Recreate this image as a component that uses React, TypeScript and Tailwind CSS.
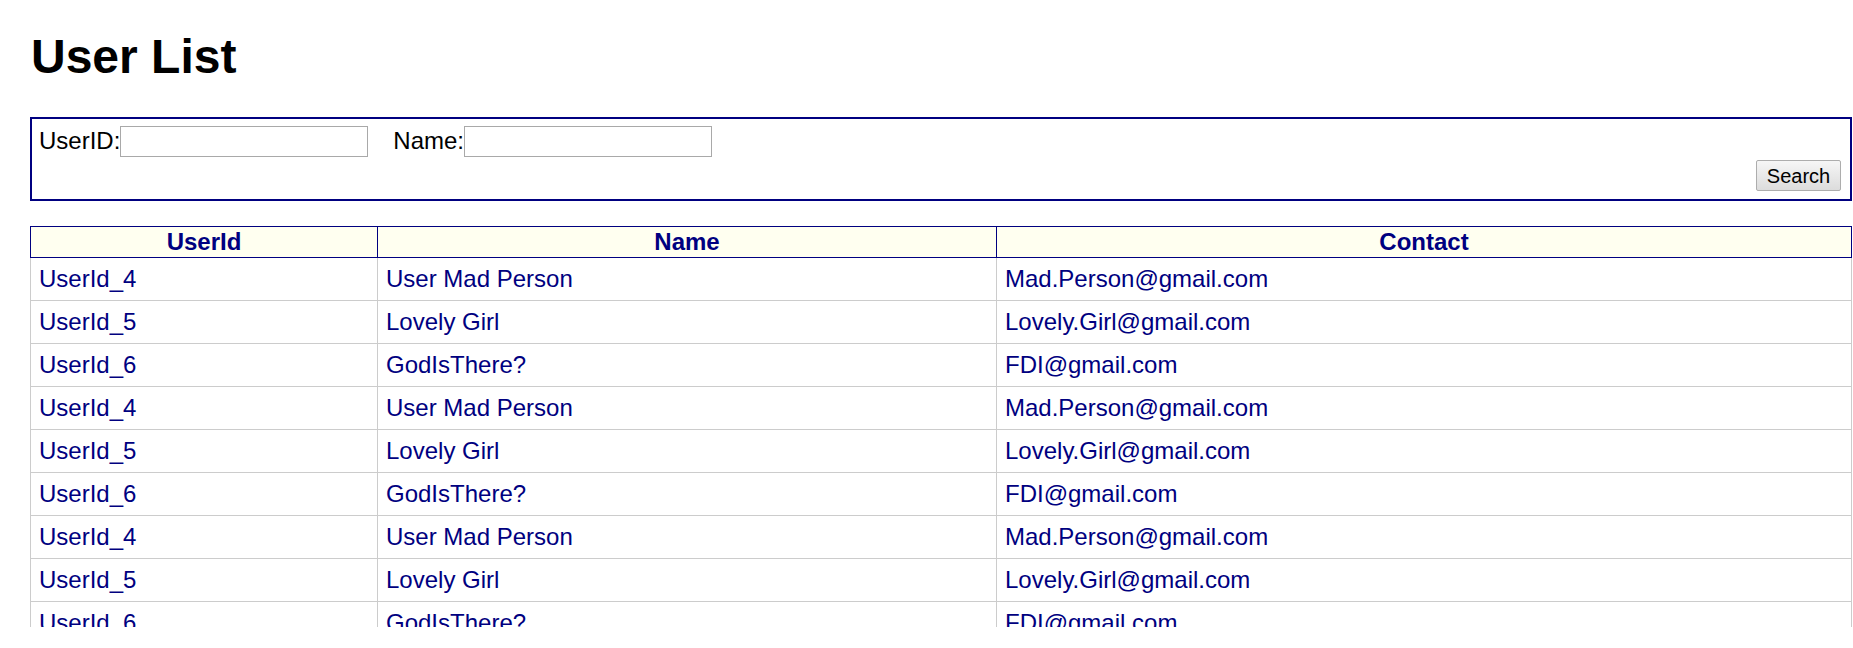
import React, { useState } from 'react';

type User = { id: string; name: string; contact: string };

const base: User[] = [
  { id: 'UserId_4', name: 'User Mad Person', contact: 'Mad.Person@gmail.com' },
  { id: 'UserId_5', name: 'Lovely Girl', contact: 'Lovely.Girl@gmail.com' },
  { id: 'UserId_6', name: 'GodIsThere?', contact: 'FDI@gmail.com' },
];

const users: User[] = [...base, ...base, ...base, ...base];

export default function App() {
  const [userId, setUserId] = useState('');
  const [name, setName] = useState('');

  return (
    <div className="h-[648px] overflow-hidden bg-white pl-[30px] pr-[1px] font-['Liberation_Sans',Arial,sans-serif]">
      <h1 className="mt-[29px] pl-[1px] text-[48px] font-bold leading-[55px] text-black">User List</h1>

      {/* Search box */}
      <div className="mt-[33px] border-2 border-[#000080] pt-[7px] pb-[8px] pl-[7px] pr-[9px]">
        <div className="flex h-[31px] items-center text-[24px] text-black">
          <span className="-mt-px">UserID:</span>
          <input
            type="text"
            value={userId}
            onChange={(e) => setUserId(e.target.value)}
            className="h-[31px] w-[248px] border border-[#a9a9a9] bg-white px-1 text-[20px] outline-none"
          />
          <span className="-mt-px ml-[25px]">Name:</span>
          <input
            type="text"
            value={name}
            onChange={(e) => setName(e.target.value)}
            className="h-[31px] w-[248px] border border-[#a9a9a9] bg-white px-1 text-[20px] outline-none"
          />
        </div>
        <div className="mt-[3px] flex justify-end">
          <button className="h-[31px] w-[85px] rounded-[2px] border border-[#adadad] bg-linear-to-b from-[#f6f6f6] to-[#dcdcdc] text-[20px] text-black">
            Search
          </button>
        </div>
      </div>

      {/* Users table */}
      <div className="mt-[25px] h-[401px] overflow-hidden">
        <table className="w-full table-fixed border-collapse text-[24px] text-[#000080]">
          <colgroup>
            <col className="w-[347px]" />
            <col className="w-[619px]" />
            <col />
          </colgroup>
          <thead>
            <tr>
              {['UserId', 'Name', 'Contact'].map((h) => (
                <th
                  key={h}
                  className="h-[30px] border border-[#000080] bg-[#fffff0] p-0 text-center font-bold leading-[30px]"
                >
                  {h}
                </th>
              ))}
            </tr>
          </thead>
          <tbody>
            {users.map((u, i) => (
              <tr key={i}>
                <td className="border border-[#cccccc] px-[8px] py-[7px] leading-[28px]">{u.id}</td>
                <td className="border border-[#cccccc] px-[8px] py-[7px] leading-[28px]">{u.name}</td>
                <td className="border border-[#cccccc] px-[8px] py-[7px] leading-[28px]">{u.contact}</td>
              </tr>
            ))}
          </tbody>
        </table>
      </div>
    </div>
  );
}
